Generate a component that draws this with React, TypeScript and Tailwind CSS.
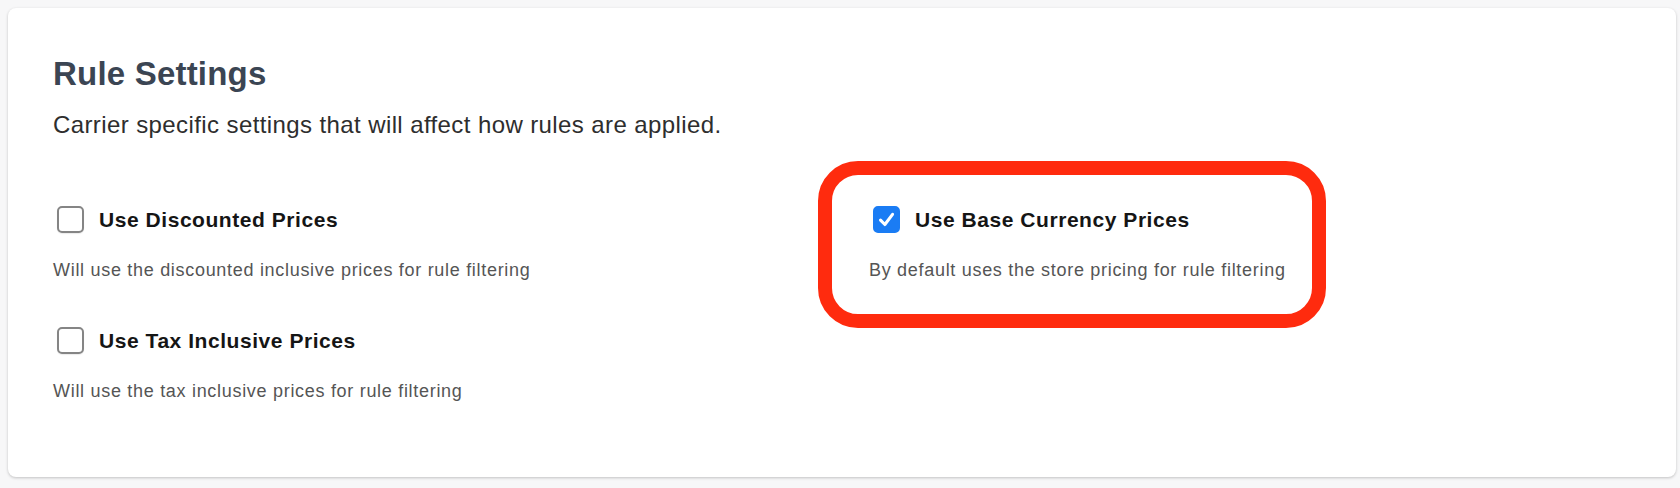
import { useState } from 'react'

type Setting = {
  id: string
  label: string
  description: string
}

const LEFT_SETTINGS: Setting[] = [
  {
    id: 'discounted',
    label: 'Use Discounted Prices',
    description: 'Will use the discounted inclusive prices for rule filtering',
  },
  {
    id: 'tax',
    label: 'Use Tax Inclusive Prices',
    description: 'Will use the tax inclusive prices for rule filtering',
  },
]

function Checkbox({ checked, onChange }: { checked: boolean; onChange: () => void }) {
  return (
    <button
      type="button"
      role="checkbox"
      aria-checked={checked}
      onClick={onChange}
      className={`ml-1 w-[27px] h-[27px] shrink-0 rounded-[5px] flex items-center justify-center ${
        checked
          ? 'bg-[#1a7cf4] border-2 border-[#1a7cf4]'
          : 'bg-white border-2 border-[#858585] shadow-[0_1px_1px_rgba(0,0,0,0.08)]'
      }`}
    >
      {checked && (
        <svg viewBox="0 0 27 27" className="w-[27px] h-[27px]">
          <path
            d="M6.5 14.2 L11.6 19.4 L20.6 7.4"
            fill="none"
            stroke="white"
            strokeWidth="3.6"
            strokeLinecap="round"
            strokeLinejoin="round"
          />
        </svg>
      )}
    </button>
  )
}

function SettingRow({
  setting,
  checked,
  onToggle,
}: {
  setting: Setting
  checked: boolean
  onToggle: () => void
}) {
  return (
    <div>
      <label className="flex items-center h-[27px] gap-[15px] cursor-pointer">
        <Checkbox checked={checked} onChange={onToggle} />
        <span className="text-[21px] leading-[28px] font-bold text-[#151515] tracking-[0.55px]">
          {setting.label}
        </span>
      </label>
      <p className="mt-[25px] text-[18px] leading-[24px] text-[#555555] tracking-[0.7px]">
        {setting.description}
      </p>
    </div>
  )
}

export default function App() {
  const [values, setValues] = useState<Record<string, boolean>>({
    discounted: false,
    tax: false,
    base: true,
  })

  const toggle = (id: string) => setValues((prev) => ({ ...prev, [id]: !prev[id] }))

  return (
    <div className="min-h-[488px] bg-[#f7f7f8] pt-2 pl-2 pr-1 pb-[11px] font-['Liberation_Sans',Arial,sans-serif]">
      <div className="h-[469px] bg-white rounded-lg shadow-[0_1px_3px_rgba(0,0,0,0.22)] pl-[45px] pt-[45px]">
        <h2 className="text-[33px] leading-[41px] font-bold text-[#3b4553] tracking-[0.2px]">
          Rule Settings
        </h2>
        <p className="mt-[15px] text-[24px] leading-[32px] text-[#2e2e2e] tracking-[0.4px]">
          Carrier specific settings that will affect how rules are applied.
        </p>

        <div className="mt-[65px] grid grid-cols-[816px_1fr]">
          <div className="flex flex-col gap-[45px]">
            {LEFT_SETTINGS.map((s) => (
              <SettingRow
                key={s.id}
                setting={s}
                checked={values[s.id]}
                onToggle={() => toggle(s.id)}
              />
            ))}
          </div>

          <div className="relative self-start">
            {/* highlight annotation */}
            <div className="absolute -top-[45px] -left-[51px] w-[508px] h-[167px] border-[14px] border-[#ff2b0e] rounded-[40px] pointer-events-none" />
            <SettingRow
              setting={{
                id: 'base',
                label: 'Use Base Currency Prices',
                description: 'By default uses the store pricing for rule filtering',
              }}
              checked={values.base}
              onToggle={() => toggle('base')}
            />
          </div>
        </div>
      </div>
    </div>
  )
}
